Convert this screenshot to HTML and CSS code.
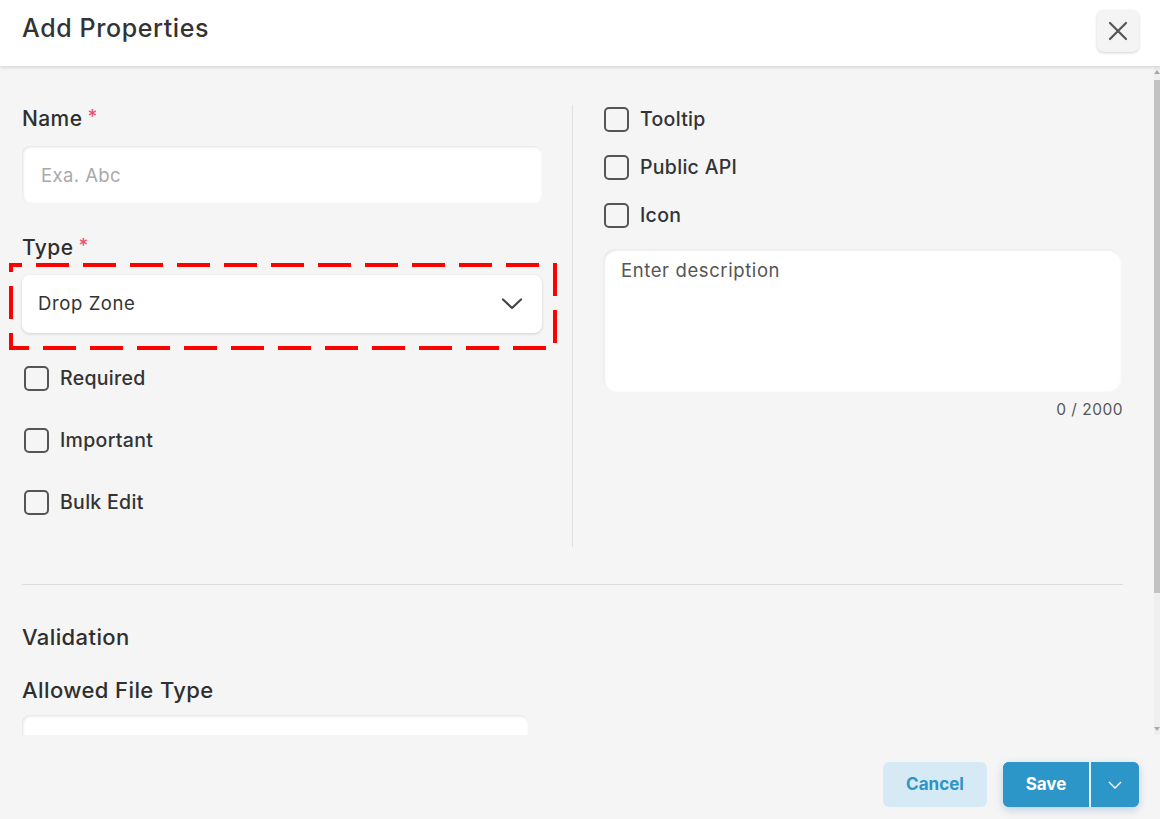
FILE: index.html
```html
<!DOCTYPE html>
<html>
<head>
<meta charset="utf-8">
<link rel="stylesheet" href="styles.css">
</head>
<body>
<div class="modal">
  <header class="header">
    <h1 class="title">Add Properties</h1>
    <button class="close" aria-label="Close">
      <svg width="20" height="20" viewBox="0 0 20 20"><path d="M2 2 L18 18 M18 2 L2 18" stroke="#555" stroke-width="2.2" stroke-linecap="round" fill="none"/></svg>
    </button>
  </header>
  <div class="body">
    <main class="viewport">
      <div class="content">
        <section class="top">
          <div class="col-left">
            <label class="label">Name<span class="req">*</span></label>
            <div class="input"><span class="placeholder">Exa. Abc</span></div>
            <label class="label type-label">Type<span class="req">*</span></label>
            <div class="select-wrap">
              <svg class="dash" width="548" height="87" viewBox="0 0 548 87"><rect x="2" y="2" width="544" height="83" fill="none" stroke="#ff0000" stroke-width="4" stroke-dasharray="33 14" stroke-dashoffset="22"/></svg>
              <div class="select">
                <span class="select-val">Drop Zone</span>
                <svg width="22" height="14" viewBox="0 0 22 14"><path d="M2 2.5 L11 11 L20 2.5" stroke="#444" stroke-width="2.2" fill="none" stroke-linecap="round" stroke-linejoin="round"/></svg>
              </div>
            </div>
            <div class="checks-left">
              <div class="check"><span class="box"></span><span>Required</span></div>
              <div class="check"><span class="box"></span><span>Important</span></div>
              <div class="check"><span class="box"></span><span>Bulk Edit</span></div>
            </div>
          </div>
          <div class="vdivider"></div>
          <div class="col-right">
            <div class="checks-right">
              <div class="check"><span class="box"></span><span>Tooltip</span></div>
              <div class="check"><span class="box"></span><span>Public API</span></div>
              <div class="check"><span class="box"></span><span>Icon</span></div>
            </div>
            <div class="textarea"><span class="ta-placeholder">Enter description</span></div>
            <div class="counter">0 / 2000</div>
          </div>
        </section>
        <hr class="hdivider">
        <h2 class="section-title">Validation</h2>
        <label class="label file-label">Allowed File Type</label>
        <div class="input file-input"></div>
      </div>
    </main>
    <div class="scrollbar">
      <span class="arrow up"></span>
      <div class="track"><div class="thumb"></div></div>
      <span class="arrow down"></span>
    </div>
  </div>
  <footer class="footer">
    <button class="btn-cancel">Cancel</button>
    <div class="save-group">
      <button class="btn-save">Save</button>
      <button class="btn-more" aria-label="More">
        <svg width="14" height="8" viewBox="0 0 14 8"><path d="M1 1 L7 7 L13 1" stroke="#fff" stroke-width="1.4" fill="none"/></svg>
      </button>
    </div>
  </footer>
</div>
</body>
</html>
```
FILE: styles.css
```css
* { box-sizing: border-box; }
html, body { margin: 0; padding: 0; }
body {
  font-family: Inter, "Open Sans", sans-serif;
  background: #f5f5f5;
  color: #333;
}
.modal {
  width: 1160px;
  height: 819px;
  display: flex;
  flex-direction: column;
  background: #f5f5f5;
}
.header {
  height: 66px;
  flex: none;
  background: #fff;
  display: flex;
  align-items: center;
  justify-content: space-between;
  padding: 0 21px 0 22px;
  box-shadow: 0 1px 4px rgba(0,0,0,0.16);
  position: relative;
  z-index: 2;
}
.title {
  margin: 0;
  font-size: 25px;
  font-weight: 500;
  color: #333;
  letter-spacing: 0.6px;
  padding-bottom: 10px;
}
.close {
  width: 42px;
  height: 42px;
  border: none;
  border-radius: 7px;
  background: #f4f4f4;
  box-shadow: 0 1px 3px rgba(0,0,0,0.18);
  display: flex;
  align-items: center;
  justify-content: center;
  padding: 0;
  margin-bottom: 4px;
}
.body {
  flex: 1;
  display: flex;
  min-height: 0;
  background: #f5f5f5;
}
.viewport {
  flex: 1;
  overflow: hidden;
}
.scrollbar {
  width: 6px;
  flex: none;
  background: #efefef;
  display: flex;
  flex-direction: column;
  align-items: center;
}
.arrow {
  width: 0;
  height: 0;
  border-left: 3px solid transparent;
  border-right: 3px solid transparent;
  margin: 4px 0;
}
.arrow.up { border-bottom: 4px solid #a8a8a8; }
.arrow.down { border-top: 4px solid #a8a8a8; }
.track {
  flex: 1;
  width: 100%;
  padding-top: 2px;
}
.thumb {
  width: 100%;
  height: 513px;
  background: #c2c2c2;
}
.content {
  padding: 39px 31px 150px 22px;
}
.top {
  display: grid;
  grid-template-columns: 520px 1px 520px;
  column-gap: 30px;
}
.col-left { padding-top: 2px; padding-bottom: 33px; }
.label {
  display: block;
  font-size: 21px;
  line-height: 24px;
  font-weight: 500;
  color: #2f2f2f;
  letter-spacing: 0.4px;
}
.req {
  color: #f0506e;
  font-size: 19px;
  vertical-align: top;
  margin-left: 5px;
  position: relative;
  top: -2px;
}
.input {
  height: 57px;
  margin-top: 15px;
  background: #fff;
  border-radius: 8px;
  box-shadow: inset 1px 1px 3px rgba(0,0,0,0.12);
  display: flex;
  align-items: center;
  padding-left: 19px;
}
.placeholder {
  color: #a9a9a9;
  font-size: 18.5px;
  letter-spacing: 0.4px;
}
.type-label { margin-top: 33px; }
.select-wrap {
  position: relative;
  margin-top: 15px;
}
.dash {
  position: absolute;
  left: -13px;
  top: -12px;
}
.select {
  height: 58px;
  background: #fff;
  border-radius: 8px;
  box-shadow: 0 1px 3px rgba(0,0,0,0.16);
  display: flex;
  align-items: center;
  justify-content: space-between;
  padding: 0 19px 0 16px;
}
.select-val { font-size: 18.5px; color: #333; letter-spacing: 0.6px; padding-bottom: 2px; }
.checks-left {
  margin-top: 33px;
  display: flex;
  flex-direction: column;
  gap: 38px;
  padding-left: 2px;
}
.check {
  display: flex;
  align-items: center;
  gap: 11px;
  height: 24px;
  font-size: 19.5px;
  font-weight: 500;
  color: #333;
  letter-spacing: 0.3px;
}
.box {
  width: 25px;
  height: 25px;
  border: 2.2px solid #555;
  border-radius: 5px;
  flex: none;
}
.vdivider { background: #e0e0e0; }
.col-right { padding-top: 2px; }
.checks-right {
  display: flex;
  flex-direction: column;
  gap: 24px;
  padding-left: 1px;
}
.textarea {
  margin-top: 22px;
  margin-right: 2px;
  height: 143px;
  background: #fff;
  border-radius: 13px;
  box-shadow: inset 1px 1px 3px rgba(0,0,0,0.12);
  padding: 10px 18px;
}
.ta-placeholder { font-size: 18.5px; color: #555; letter-spacing: 0.6px; }
.counter {
  margin-top: 9px;
  text-align: right;
  font-size: 15.5px;
  line-height: 18px;
  color: #555;
  letter-spacing: 0.5px;
}
.hdivider {
  border: none;
  border-top: 1px solid #dcdcdc;
  margin: 37px 0 0 0;
}
.section-title {
  margin: 39px 0 0 0;
  font-size: 22px;
  line-height: 26px;
  font-weight: 500;
  color: #2f2f2f;
  letter-spacing: 0.4px;
}
.file-label { margin-top: 28px; font-size: 22px; }
.file-input { width: 506px; margin-top: 13px; }
.footer {
  height: 84px;
  flex: none;
  display: flex;
  align-items: center;
  justify-content: flex-end;
  gap: 16px;
  padding: 15px 21px 0 0;
  background: #f5f5f5;
}
.btn-cancel {
  width: 104px;
  height: 45px;
  border: none;
  border-radius: 6px;
  background: #d6eaf6;
  color: #2e95c6;
  font-family: Inter, sans-serif;
  font-size: 17px;
  font-weight: 700;
  padding-bottom: 3px;
}
.save-group {
  display: flex;
  height: 45px;
  border-radius: 6px;
  overflow: hidden;
  background: #2d96c8;
  box-shadow: 0 3px 8px rgba(40,100,170,0.25);
}
.btn-save {
  width: 88px;
  border: none;
  background: #2d96c8;
  color: #fff;
  font-family: Inter, sans-serif;
  font-size: 17px;
  font-weight: 700;
  border-right: 2px solid #e8f2f8;
  padding-bottom: 3px;
}
.btn-more {
  width: 48px;
  border: none;
  background: #2d96c8;
  display: flex;
  align-items: center;
  justify-content: center;
  padding: 0;
}
```
